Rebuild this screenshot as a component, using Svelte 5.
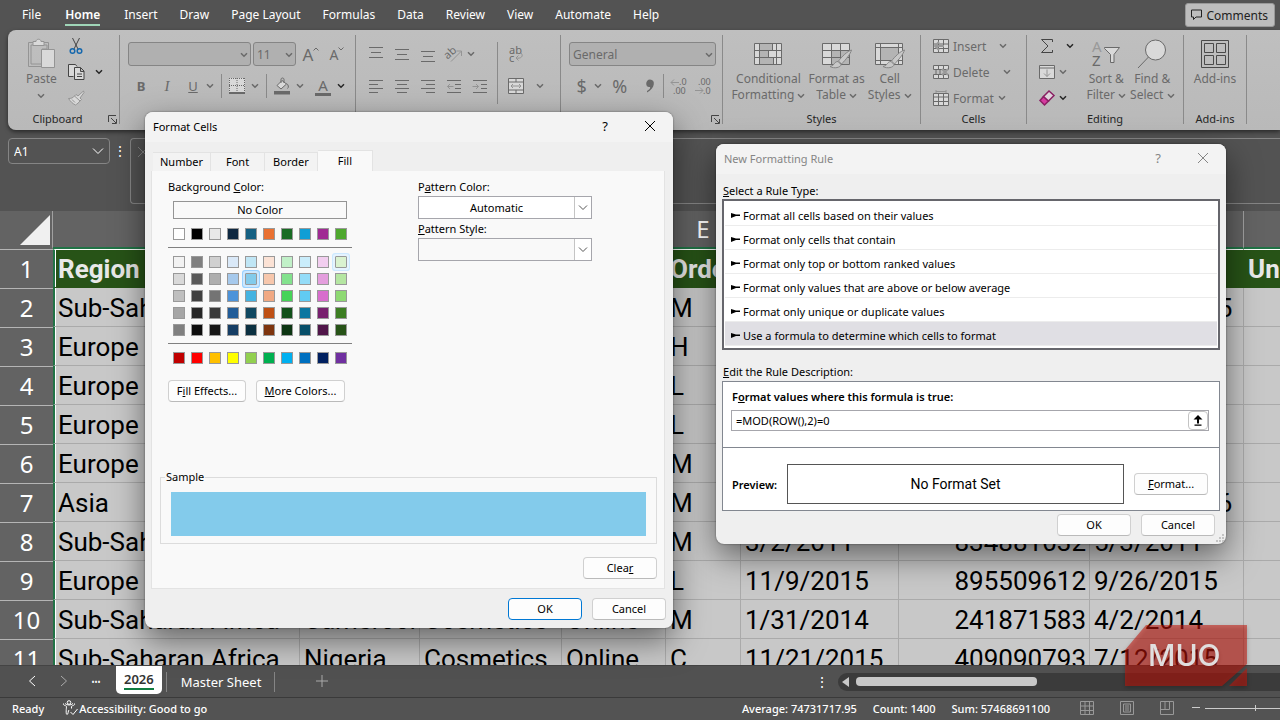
<script lang="ts">
  const menus = ['File', 'Home', 'Insert', 'Draw', 'Page Layout', 'Formulas', 'Data', 'Review', 'View', 'Automate', 'Help'];

  const columns = [
    { letter: 'A', width: 247 },
    { letter: 'B', width: 120 },
    { letter: 'C', width: 142 },
    { letter: 'D', width: 104 },
    { letter: 'E', width: 75 },
    { letter: 'F', width: 158 },
    { letter: 'G', width: 191 },
    { letter: 'H', width: 154 },
    { letter: 'I', width: 150 },
  ];

  const rows = [
    ['Region', 'Country', 'Item Type', 'Channel', 'Order Priority', 'Order Date', 'Order ID', 'Ship Date', 'Units Sold'],
    ['Sub-Saharan Africa', 'Chad', 'Office', 'Online', 'M', '1/27/2015', '292494523', '12/12/2015', ''],
    ['Europe', 'Latvia', 'Beverages', 'Online', 'H', '12/28/2015', '361825549', '1/23/2016', ''],
    ['Europe', 'Latvia', 'Beverages', 'Online', 'L', '1/13/2011', '141515767', '2/1/2011', ''],
    ['Europe', 'Latvia', 'Clothes', 'Online', 'L', '9/11/2012', '500364005', '10/6/2012', ''],
    ['Europe', 'Latvia', 'Clothes', 'Online', 'M', '10/30/2015', '127481591', '1/5/2016', ''],
    ['Asia', 'China', 'Fruits', 'Online', 'M', '9/17/2016', '482292354', '10/22/2016', ''],
    ['Sub-Saharan Africa', 'Ghana', 'Office', 'Online', 'M', '3/2/2011', '834881032', '5/3/2011', ''],
    ['Europe', 'Latvia', 'Clothes', 'Online', 'L', '11/9/2015', '895509612', '9/26/2015', ''],
    ['Sub-Saharan Africa', 'Cameroon', 'Cosmetics', 'Online', 'M', '1/31/2014', '241871583', '4/2/2014', ''],
    ['Sub-Saharan Africa', 'Nigeria', 'Cosmetics', 'Online', 'C', '11/21/2015', '409090793', '7/12/2015', ''],
  ];

  const baseColors = ['#ffffff', '#000000', '#e8e8e8', '#0e2841', '#156082', '#e97132', '#196b24', '#0f9ed5', '#a02b93', '#4ea72e'];

  const shades = [
    ['#f2f2f2', '#808080', '#d0d0d0', '#dae9f8', '#c0e6f5', '#fbe2d5', '#c1f0c8', '#caedfb', '#f2ceef', '#daf2d0'],
    ['#d9d9d9', '#595959', '#aeaeae', '#a6c9ec', '#83cbeb', '#f7c7ac', '#83e28e', '#94dcf8', '#e49edd', '#b5e6a2'],
    ['#bfbfbf', '#404040', '#747474', '#4d93d9', '#44b3e1', '#f1a983', '#47d359', '#61cbf3', '#d86dcd', '#8ed973'],
    ['#a6a6a6', '#262626', '#3a3a3a', '#215c98', '#104861', '#be5014', '#12501a', '#0b76a0', '#78206e', '#3c7d22'],
    ['#808080', '#0d0d0d', '#171717', '#153d64', '#0b3041', '#7e350e', '#0c3512', '#074f69', '#501549', '#275317'],
  ];

  const standardColors = ['#c00000', '#ff0000', '#ffc000', '#ffff00', '#92d050', '#00b050', '#00b0f0', '#0070c0', '#002060', '#7030a0'];

  const ruleTypes = [
    'Format all cells based on their values',
    'Format only cells that contain',
    'Format only top or bottom ranked values',
    'Format only values that are above or below average',
    'Format only unique or duplicate values',
    'Use a formula to determine which cells to format',
  ];

  let fill = $state('#83cbeb');
  let rule = $state(5);
  let formula = $state('=MOD(ROW(),2)=0');
</script>

{#snippet chev(dark = false)}
  <svg class="chev" class:dark width="8" height="6" viewBox="0 0 8 6"><path d="M1 1.2 4 4.2 7 1.2" /></svg>
{/snippet}

{#snippet launcher()}
  <svg class="launcher" width="9" height="9" viewBox="0 0 9 9"><path d="M.5 7V.5H8M3 3l5 5M8.500 4v4.500H4" /></svg>
{/snippet}

{#snippet lines(y: number, widths: number[])}
  <svg width="16" height="18" viewBox="0 0 16 18">
    {#each widths as w, i}
      <path d="M{8 - w / 2} {y + i * 5 - 0.5}h{w}" />
    {/each}
  </svg>
{/snippet}

{#snippet swatches(colors: string[], hot = -1)}
  <div class="swatches">
    {#each colors as color, i}
      <input type="radio" name="fill" value={color} bind:group={fill} aria-label={color} class:hot={i === hot} style="background-color: {color}" />
    {/each}
  </div>
{/snippet}

{#snippet cross()}
  <svg width="12" height="12" viewBox="0 0 12 12"><path d="M1 1l10 10M11 1 1 11" /></svg>
{/snippet}

<div class="app">
  <nav class="menu">
    {#each menus as item}
      <button class:active={item === 'Home'}>{item}</button>
    {/each}
    <button class="comments">
      <svg width="13" height="12" viewBox="0 0 13 12"><path d="M1.500 1h10v7H6L3.500 10.500V8h-2z" /></svg>
      Comments
    </button>
  </nav>

  <div class="ribbon">
    <section class="group clipboard">
      <div class="tools">
        <button class="big">
          <svg width="30" height="32" viewBox="0 0 30 32">
            <path class="lite" d="M2.500 4.500h20v24h-20z" />
            <path class="lite" d="M5 7v19h11V11h5V7z" />
            <path class="lite solid" d="M7 7.500v-4h3c0-3 5-3 5 0h3v4z" />
            <path class="lite solid" d="M15.500 11.500h13v18h-13z" />
          </svg>
          <span>Paste</span>
          {@render chev()}
        </button>
        <div class="stack">
          <button class="line">
            <svg width="16" height="18" viewBox="0 0 16 18"><path class="ink" d="M4.500 1l5.500 11M11.500 1 6 12" /><circle class="blue" cx="4.500" cy="14" r="2.300" /><circle class="blue" cx="11.500" cy="14" r="2.300" /></svg>
          </button>
          <button class="line">
            <svg width="17" height="18" viewBox="0 0 17 18"><path class="ink solid" d="M5.500 13.500h-5V1.500h7l1.500 2" /><path class="ink solid" d="M6.500 4.500h6l3.500 3.500v8.500H6.500zM12.500 4.500v4H16M9 11h5M9 13.500h5" /></svg>
            {@render chev(true)}
          </button>
          <button class="line">
            <svg width="17" height="16" viewBox="0 0 17 16"><path class="lite solid" d="M15.500 1 10 6 8 4.500 6.500 6l5.500 5 1.500-1.500L12 8l4-5.500zM6.500 6C5 8 3 8.500.5 8.500c2 3 4 5 7 6.500 1.500-1 3.500-2.500 4.500-4M4 9.500l3 3" /></svg>
          </button>
        </div>
      </div>
      <h2>Clipboard</h2>
      {@render launcher()}
    </section>

    <section class="group font">
      <div class="bar">
        <label class="pick family"><select aria-label="Font"><option></option></select>{@render chev()}</label>
        <label class="pick size"><select aria-label="Font size"><option>11</option></select>{@render chev()}</label>
        <button class="cell grow">A<svg width="6" height="4" viewBox="0 0 6 4"><path d="M.5 3.500 3 1l2.500 2.500" /></svg></button>
        <button class="cell shrink">A<svg width="6" height="4" viewBox="0 0 6 4"><path d="M.5.5 3 3 5.500.5" /></svg></button>
      </div>
      <div class="bar second">
        <button class="cell"><b>B</b></button>
        <button class="cell serif"><i>I</i></button>
        <button class="cell"><u>U</u></button>
        {@render chev()}
        <span class="rule"></span>
        <button class="cell">
          <svg width="16" height="16" viewBox="0 0 16 16"><path class="solid none" d="M0 0h16v14H0z" /><path class="dots" d="M.5 0v14M8 0v14M15.500 0v14M0 .5h16M0 7.500h16" /><path class="thick" d="M0 15h16" /></svg>
        </button>
        {@render chev()}
        <span class="rule"></span>
        <button class="cell">
          <svg width="16" height="18" viewBox="0 0 16 18"><path class="solid" d="M8 3.500 3 8.500l4 3.500 5.500-5z" /><path d="M7 6V2.500c0-2 3-2 3 0V6M12.500 6.500c2 1 2.500 4 1 5" /><path class="block" d="M0 14h16v3.500H0z" /></svg>
        </button>
        {@render chev()}
        <button class="cell ink-a">A<i></i></button>
        {@render chev(true)}
      </div>
    </section>

    <section class="group align">
      <div class="block-left">
        <div class="bar">
          <button class="cell">{@render lines(3, [14, 10, 14])}</button>
          <button class="cell">{@render lines(5, [14, 10, 14])}</button>
          <button class="cell">{@render lines(7, [14, 10, 14])}</button>
          <button class="cell">
            <svg width="18" height="18" viewBox="0 0 18 18"><text class="tilt" x="0" y="12" transform="rotate(-42 5 10)">ab</text><path class="lite" d="M6 16.500 16 6.500M11.500 6H16.500v5" /></svg>
          </button>
          {@render chev()}
        </div>
        <div class="bar second">
          <button class="cell"><svg width="16" height="18" viewBox="0 0 16 18"><path d="M1 3.500h14M1 7.500h9M1 11.500h14M1 15.500h9" /></svg></button>
          <button class="cell"><svg width="16" height="18" viewBox="0 0 16 18"><path d="M1 3.500h14M3 7.500h10M1 11.500h14M3 15.500h10" /></svg></button>
          <button class="cell"><svg width="16" height="18" viewBox="0 0 16 18"><path d="M1 3.500h14M6 7.500h9M1 11.500h14M6 15.500h9" /></svg></button>
          <button class="cell"><svg width="16" height="18" viewBox="0 0 16 18"><path d="M1 3.500h14M9 7.500h6M9 11.500h6M1 15.500h14" /><path class="lite" d="M1.500 9.500h6M4 7 1.500 9.500 4 12" /></svg></button>
          <button class="cell"><svg width="16" height="18" viewBox="0 0 16 18"><path d="M1 3.500h14M9 7.500h6M9 11.500h6M1 15.500h14" /><path class="lite" d="M.5 9.500h6M4 7l2.500 2.500L4 12" /></svg></button>
        </div>
      </div>
      <span class="rule tall"></span>
      <div class="block-right">
        <button class="wrap-text">
          <svg width="18" height="20" viewBox="0 0 18 20"><text x="1" y="10">ab</text><text x="1" y="18">c</text><path class="lite" d="M13 9c3 3 0 6-5 5M10.500 11.500 8 14l2.500 2.500" /></svg>
        </button>
        <button class="merge">
          <svg width="16" height="16" viewBox="0 0 16 16"><path class="solid" d="M.5.5h15v15H.5zM.5 4h15M.5 12h15M8 .5V4M8 12v3.500" /><path class="lite" d="M3 8h10M5 6 3 8l2 2M11 6l2 2-2 2" /></svg>
          {@render chev()}
        </button>
      </div>
    </section>

    <section class="group number">
      <label class="pick"><select aria-label="Number format"><option>General</option></select>{@render chev()}</label>
      <div class="bar second">
        <button class="cell glyph">$</button>
        {@render chev()}
        <button class="cell glyph wide">%</button>
        <button class="cell"><svg width="10" height="14" viewBox="0 0 10 14"><path class="block" d="M5 .5c6 0 5 9-3 13V12c3-2 3.500-3 3-4C0 9 0 .5 5 .5z" /></svg></button>
        <span class="rule"></span>
        <button class="cell dec"><svg width="17" height="18" viewBox="0 0 17 18"><path class="lite" d="M1 5.500h8M4 2.500l-3 3 3 3" /><text x="9" y="8">.0</text><text x="3" y="17">.00</text></svg></button>
        <button class="cell dec"><svg width="17" height="18" viewBox="0 0 17 18"><text x="3" y="8">.00</text><path class="lite" d="M0 13.500h8M5 10.500l3 3-3 3" /><text x="8" y="17">.0</text></svg></button>
      </div>
      {@render launcher()}
    </section>

    <section class="group styles">
      <div class="tools">
        <button class="big">
          <svg width="28" height="24" viewBox="0 0 28 24"><path class="solid" d="M.5 1.500h27v21H.5z" /><path class="gray" d="M6 2h12v6H6zM6 9h8v6H6zM6 16h14v6H6z" /><path d="M.5 8.500h27M.5 15.500h27M5.500 1.500v21M18.500 1.500v7M14.500 8.500v7M19.500 15.500v7M22.500 1.500v21" /></svg>
          <span>Conditional<br />Formatting {@render chev()}</span>
        </button>
        <button class="big">
          <svg width="30" height="28" viewBox="0 0 30 28"><path class="solid" d="M.5 3.500h27v21H.5z" /><path class="gray" d="M10 11h17v13H10z" /><path d="M.5 10.500h27M.5 17.500h27M9.500 3.500v21M18.500 3.500v21" /><path class="brush" d="M29.500 10c-4 1-10 7-13 11l3 3c4-4 9-10 10-14zM16 21.500c-4 0-3 4-8 5 4 2.500 11 1 11-2z" /></svg>
          <span>Format as<br />Table {@render chev()}</span>
        </button>
        <button class="big">
          <svg width="30" height="28" viewBox="0 0 30 28"><path class="solid" d="M.5 3.500h27v21H.5z" /><path class="gray" d="M6 8h17v12H6z" /><path d="M.5 7.500h27M.5 20.500h27M5.500 3.500v21M23.500 3.500v21" /><path class="brush" d="M29.500 10c-4 1-10 7-13 11l3 3c4-4 9-10 10-14zM16 21.500c-4 0-3 4-8 5 4 2.500 11 1 11-2z" /></svg>
          <span>Cell<br />Styles {@render chev()}</span>
        </button>
      </div>
      <h2>Styles</h2>
    </section>

    <section class="group cells">
      <div class="stack">
        <button class="line">
          <svg width="16" height="14" viewBox="0 0 16 14"><path class="solid" d="M.5.5h15v13H.5zM.5 5h15M.5 9.500h15M5.500.5v13M10.500.5v13" /><path class="arrow" d="M11 7H2M6 3 2 7l4 4" /></svg>
          <span class="wide">Insert</span>{@render chev()}
        </button>
        <button class="line">
          <svg width="16" height="14" viewBox="0 0 16 14"><path class="solid" d="M.5.5h15v4H.5zM.5 9.500h15v4H.5zM5.500.5v4M10.500.5v4M5.500 9.500v4M10.500 9.500v4M3 4.500v5M7 4.500v5" /><path class="arrow" d="M9 4l6 6M15 4l-6 6" /></svg>
          <span class="wide">Delete</span>{@render chev()}
        </button>
        <button class="line">
          <svg width="16" height="16" viewBox="0 0 16 16"><path class="solid" d="M.5 3.500h15v12H.5zM.5 7h15M.5 11.500h15M5.500 3.500v12M10.500 3.500v12" /><path class="lite" d="M3 1.500h10M3 0v3M13 0v3" /></svg>
          <span>Format</span>{@render chev()}
        </button>
      </div>
      <h2>Cells</h2>
    </section>

    <section class="group editing">
      <div class="tools">
        <div class="stack">
          <button class="line first">
            <svg width="16" height="16" viewBox="0 0 16 16"><path class="ink" d="M13.500 4V1.500h-11L9 8l-6.500 6.500h11V12" /></svg>{@render chev(true)}
          </button>
          <button class="line">
            <svg width="16" height="14" viewBox="0 0 16 14"><path class="solid" d="M.5.5h15v13H.5zM.5 3h15" /><path class="lite" d="M8 4.500v7M5 8.500l3 3 3-3" /></svg>{@render chev()}
          </button>
          <button class="line">
            <svg width="16" height="16" viewBox="0 0 16 16"><path class="pink" d="M4.500 6.500 1 10.500l4.500 4.500 4-4z" /><path class="pink hollow" d="M4.500 6.500 10 1l5 4.500L9.500 11z" /></svg>{@render chev(true)}
          </button>
        </div>
        <button class="big">
          <svg width="28" height="28" viewBox="0 0 28 28"><text class="az faint" x="0" y="12">A</text><text class="az" x="0" y="26">Z</text><path class="solid" d="M12.500 7.500h15l-5.500 7v8h-3.500v-8l-6-6z" /></svg>
          <span>Sort &amp;<br />Filter {@render chev()}</span>
        </button>
        <button class="big">
          <svg width="30" height="30" viewBox="0 0 30 30"><circle class="solid" cx="18.500" cy="11" r="10" /><path d="M11.500 18 1 29" /></svg>
          <span>Find &amp;<br />Select {@render chev()}</span>
        </button>
      </div>
      <h2>Editing</h2>
    </section>

    <section class="group addins">
      <button class="big">
        <svg class="boxes" width="28" height="28" viewBox="0 0 28 28"><path d="M.5.5h27v27H.5zM3.500 3.500h9v9h-9zM15.500 3.500h9v9h-9zM3.500 15.500h9v9h-9zM15.500 15.500h9v9h-9z" /></svg>
        <span>Add-ins</span>
      </button>
      <h2>Add-ins</h2>
    </section>
  </div>

  <div class="formula-row">
    <label class="name-box">
      <input aria-label="Name box" value="A1" />
      <svg width="12" height="8" viewBox="0 0 12 8"><path d="M1 1.500l5 5 5-5" /></svg>
    </label>
    <span class="kebab">⋮</span>
    <div class="formula-box">{@render cross()}</div>
  </div>

  <main class="sheet">
    <table>
      <colgroup>
        <col style="width: 53px" />
        {#each columns as col}<col style="width: {col.width}px" />{/each}
      </colgroup>
      <thead>
        <tr>
          <th><svg width="30" height="30" viewBox="0 0 30 30"><path d="M30 0v30H0z" /></svg></th>
          {#each columns as col}<th scope="col">{col.letter}</th>{/each}
        </tr>
      </thead>
      <tbody>
        {#each rows as row, r}
          <tr class:titles={r === 0}>
            <th scope="row">{r + 1}</th>
            {#each row as value, c}<td class:num={c === 6 && r > 0}>{value}</td>{/each}
          </tr>
        {/each}
      </tbody>
    </table>
  </main>

  <div class="tabs">
    <button class="nav"><svg width="8" height="12" viewBox="0 0 8 12"><path d="M7 1 1.500 6 7 11" /></svg></button>
    <button class="nav"><svg class="dim" width="8" height="12" viewBox="0 0 8 12"><path d="M1 1l5.500 5L1 11" /></svg></button>
    <button class="nav dots">•••</button>
    <button class="tab current"><span>2026</span></button>
    <button class="tab">Master Sheet</button>
    <button class="plus"><svg width="12" height="12" viewBox="0 0 12 12"><path d="M6 0v12M0 6h12" /></svg></button>
    <span class="kebab">⋮</span>
    <div class="scroll">
      <svg width="7" height="10" viewBox="0 0 7 10"><path d="M7 0v10L0 5z" /></svg>
      <div class="thumb"></div>
    </div>
  </div>

  <footer class="status">
    <span>Ready</span>
    <span class="access">
      <svg width="17" height="16" viewBox="0 0 17 16"><circle cx="7" cy="2.500" r="1.800" /><path d="M1.500 3.500c-1 2 3 2 3 3s-1 8 .5 8 1-4 2-4.500M12.500 3.500c1 2-3 2-3 3v2M8.500 12l2.500 2.500L15.500 9M3 3.500c2 2 6 2 8 0" /></svg>
      Accessibility: Good to go
    </span>
    <span class="stats">
      <span>Average: 74731717.95</span>
      <span>Count: 1400</span>
      <span>Sum: 57468691100</span>
    </span>
    <span class="views">
      <svg width="14" height="14" viewBox="0 0 14 14"><path d="M.5.5h13v13H.5zM.5 5h13M.5 9.500h13M5 .5v13M9.500.5v13" /></svg>
      <svg width="14" height="14" viewBox="0 0 14 14"><path d="M.5.5h13v13H.5zM3.500 3h7v8h-7zM5 5h4M5 7h4M5 9h4" /></svg>
      <svg width="14" height="14" viewBox="0 0 14 14"><path d="M.5.5h13v13H.5zM5 .5v8M9.500.5v8M.5 8.500h9" /></svg>
    </span>
    <span class="zoom">
      <svg width="88" height="8" viewBox="0 0 88 8"><path d="M0 3.500h8M13 4.500h75M63.500 1v6" /></svg>
    </span>
  </footer>

  <div class="dialog rule-dialog" role="dialog" aria-labelledby="rule-title">
    <header>
      <h1 id="rule-title">New Formatting Rule</h1>
      <button class="sys">?</button>
      <button class="sys">{@render cross()}</button>
    </header>
    <div class="rule-body">
      <p class="caption"><u>S</u>elect a Rule Type:</p>
      <ul>
        {#each ruleTypes as type, i}
          <li>
            <button class:selected={rule === i} onclick={() => (rule = i)}>
              <svg width="9" height="5" viewBox="0 0 9 5"><path d="M0 0l5 1.500h4v1.500H5L0 5z" /></svg>
              {type}
            </button>
          </li>
        {/each}
      </ul>
      <p class="caption"><u>E</u>dit the Rule Description:</p>
      <div class="description">
        <label for="formula">F<u>o</u>rmat values where this formula is true:</label>
        <div class="formula-input">
          <input id="formula" bind:value={formula} />
          <button aria-label="Collapse dialog">
            <svg width="10" height="11" viewBox="0 0 10 11"><path d="M5 0 9.500 4.500H6V8.500H4V4.500H.5zM1.500 9.500h7v1.200h-7z" /></svg>
          </button>
        </div>
        <div class="preview">
          <b>Preview:</b>
          <output>No Format Set</output>
          <button class="push"><u>F</u>ormat...</button>
        </div>
      </div>
      <div class="actions">
        <button class="push">OK</button>
        <button class="push">Cancel</button>
      </div>
    </div>
    <svg class="grip" width="9" height="9" viewBox="0 0 9 9"><path d="M6 0h2v2H6zM3 3h2v2H3zM6 3h2v2H6zM0 6h2v2H0zM3 6h2v2H3zM6 6h2v2H6z" /></svg>
  </div>

  <div class="dialog cells-dialog" role="dialog" aria-labelledby="cells-title">
    <header>
      <h1 id="cells-title">Format Cells</h1>
      <button class="sys">?</button>
      <button class="sys">{@render cross()}</button>
    </header>
    <div class="tablist" role="tablist">
      <button role="tab" aria-selected="false">Number</button>
      <button role="tab" aria-selected="false">Font</button>
      <button role="tab" aria-selected="false">Border</button>
      <button role="tab" aria-selected="true">Fill</button>
    </div>
    <div class="panel">
      <div class="panes">
        <div class="background">
          <p class="caption">Background <u>C</u>olor:</p>
          <button class="no-color">No Color</button>
          <div class="palette">{@render swatches(baseColors)}</div>
          <div class="palette shades">
            {#each shades as shade, i}{@render swatches(shade, i === 0 ? 9 : -1)}{/each}
          </div>
          <div class="palette">{@render swatches(standardColors)}</div>
          <div class="pair">
            <button class="push">F<u>i</u>ll Effects...</button>
            <button class="push more"><u>M</u>ore Colors...</button>
          </div>
        </div>
        <div class="pattern">
          <label for="pattern-color">P<u>a</u>ttern Color:</label>
          <div class="combo white">
            <select id="pattern-color"><option>Automatic</option></select>
            <span><svg width="10" height="6" viewBox="0 0 10 6"><path d="M1 .5l4 4 4-4" /></svg></span>
          </div>
          <label for="pattern-style"><u>P</u>attern Style:</label>
          <div class="combo">
            <select id="pattern-style"><option></option></select>
            <span><svg width="10" height="6" viewBox="0 0 10 6"><path d="M1 .5l4 4 4-4" /></svg></span>
          </div>
        </div>
      </div>
      <fieldset>
        <legend>Sample</legend>
        <div class="sample" style="background-color: {fill}"></div>
      </fieldset>
      <button class="push clear">Clea<u>r</u></button>
    </div>
    <div class="actions">
      <button class="push default">OK</button>
      <button class="push">Cancel</button>
    </div>
  </div>

  <div class="logo">
    <svg width="124" height="64" viewBox="0 0 124 64">
      <path d="M22 1h101v39L98 62H1V26zM123 44v18h-18z" />
      <text x="24" y="42">MUO</text>
    </svg>
  </div>
</div>

<style>
  :global(body) {
    margin: 0;
  }

  .app {
    position: relative;
    display: flex;
    flex-direction: column;
    height: 100vh;
    overflow: hidden;
    background: #535353;
    color: #fff;
    font-family: 'Noto Sans', 'Open Sans', sans-serif;
    font-size: 12px;
  }

  button,
  input,
  select {
    margin: 0;
    padding: 0;
    border: 0;
    background: none;
    color: inherit;
    font: inherit;
  }

  h1,
  h2,
  p,
  ul {
    margin: 0;
    padding: 0;
    font-weight: 400;
    list-style: none;
  }

  svg {
    flex: none;
    overflow: visible;
    fill: none;
    stroke: currentColor;
  }

  /* menu */
  .menu {
    display: flex;
    flex: none;
    align-items: center;
    gap: 22px;
    height: 30px;
    padding: 0 5px 0 22px;
  }

  .menu button {
    height: 22px;
    border-bottom: 2px solid transparent;
    white-space: nowrap;
  }

  .menu .active {
    margin: 0 2px;
    border-color: #9fd5b7;
    font-weight: 600;
  }

  .menu .comments {
    display: flex;
    align-items: center;
    gap: 3px;
    height: 24px;
    margin-left: auto;
    padding: 0 6px 0 4px;
    border: 1px solid #999;
    border-radius: 3px;
    background: #bdbdbd;
    color: #222;
  }

  /* ribbon */
  .ribbon {
    display: flex;
    flex: none;
    height: 100px;
    margin-left: 8px;
    border-radius: 8px 0 0 8px;
    background: linear-gradient(#bfbfbf, #b9b9b9);
    box-shadow: 0 2px 4px rgba(0, 0, 0, 0.5);
    color: #6a6a6a;
  }

  .group {
    position: relative;
    display: flex;
    flex: none;
    flex-direction: column;
    box-sizing: border-box;
    padding: 3px 1px 6px 0;
  }

  .group::after {
    position: absolute;
    inset: 5px 0 6px auto;
    width: 1px;
    background: #8a8a8a;
    content: '';
  }

  .group h2 {
    margin-top: auto;
    color: #262626;
    font-size: 11px;
    line-height: 10px;
    text-align: center;
  }

  .clipboard {
    width: 112px;
  }
  .clipboard h2 {
    padding-right: 12px;
  }
  .font {
    width: 236px;
    padding: 12px 0 0 8px;
  }
  .group.align {
    flex-direction: row;
    width: 205px;
    padding: 12px 0 0 7px;
  }
  .number {
    width: 162px;
    padding: 12px 7px 0 8px;
  }
  .styles {
    width: 198px;
  }
  .cells {
    width: 106px;
    padding-left: 12px;
  }
  .cells h2 {
    padding-right: 12px;
  }
  .editing {
    width: 157px;
  }
  .addins {
    width: 63px;
    align-items: center;
  }

  .launcher {
    position: absolute;
    right: 3px;
    bottom: 6px;
    color: #444;
  }

  .chev {
    stroke: #6a6a6a;
    stroke-width: 1.5;
  }
  .chev.dark {
    stroke: #262626;
  }

  .lite {
    fill: none;
    stroke: #949494;
  }
  .solid,
  .lite.solid {
    fill: #d9d9d9;
  }
  .none {
    stroke: none;
  }
  .ink {
    stroke: #444;
  }
  .gray {
    fill: #b4b4b4;
    stroke: none;
  }
  .blue {
    stroke: #1668ad;
    stroke-width: 1.5;
  }
  .block {
    fill: #6a6a6a;
    stroke: none;
  }
  .thick {
    stroke-width: 2;
  }
  .dots {
    stroke-dasharray: 1 1;
  }
  .arrow {
    stroke: #999;
    stroke-width: 2;
  }
  .brush {
    fill: #c8c8c8;
    stroke: #858585;
  }
  .pink {
    fill: #d63ba0;
    stroke: #8a1f63;
    stroke-width: 1.5;
  }
  .pink.hollow {
    fill: #e0d4dc;
  }

  .ribbon text {
    fill: #6a6a6a;
    stroke: none;
    font-size: 11px;
  }
  .ribbon .az {
    font-size: 15px;
  }
  .ribbon .faint {
    fill: #999;
  }
  .ribbon .dec text {
    font-size: 9px;
  }

  .tools {
    display: flex;
    justify-content: center;
    gap: 3px;
  }

  .big {
    display: flex;
    flex-direction: column;
    align-items: center;
    padding-top: 4px;
    line-height: 16px;
  }

  .big > svg:first-child {
    height: 34px;
  }

  .big span {
    white-space: nowrap;
  }

  .clipboard .tools {
    justify-content: flex-start;
    gap: 11px;
    padding-left: 18px;
  }

  .clipboard .big > .chev {
    margin-top: 6px;
  }

  .stack {
    display: flex;
    flex-direction: column;
  }

  .line {
    display: flex;
    align-items: center;
    gap: 10px;
    height: 26px;
  }
  .cells .line {
    gap: 4px;
  }
  .cells .wide {
    margin-right: 9px;
  }

  .editing .line {
    gap: 4px;
  }
  .editing .first {
    gap: 11px;
  }
  .editing .tools {
    gap: 12px;
    padding-left: 4px;
  }
  .editing .big + .big {
    margin-left: -8px;
  }
  .boxes {
    color: #4a4a4a;
  }

  .bar {
    display: flex;
    align-items: center;
    height: 24px;
  }
  .second {
    margin-top: 8px;
  }

  .cell {
    display: flex;
    align-items: center;
    justify-content: center;
    width: 26px;
    height: 24px;
    font-size: 13px;
  }
  .cell.serif {
    font-family: 'Liberation Serif', serif;
    font-size: 15px;
  }
  .cell.glyph {
    font-size: 18px;
  }
  .cell.wide {
    width: 36px;
  }
  .grow {
    margin-left: 2px;
    font-size: 17px;
  }
  .shrink {
    font-size: 14px;
  }
  .grow svg,
  .shrink svg {
    align-self: flex-start;
    margin-top: 5px;
  }
  .ink-a {
    flex-direction: column;
    font-size: 15px;
    line-height: 16px;
  }
  .ink-a i {
    width: 16px;
    height: 3px;
    background: #6a6a6a;
  }

  .rule {
    width: 1px;
    height: 24px;
    margin: 0 7px;
    background: #8a8a8a;
  }
  .rule.tall {
    height: 62px;
    margin: 0 10px 0 4px;
  }
  .font .second .cell:nth-child(n + 6) {
    width: 28px;
  }
  .font .second .ink-a {
    margin-left: 5px;
  }
  .font .second .rule {
    margin: 0 1px 0 7px;
  }
  .number .rule {
    margin: 0 2px 0 0;
  }

  .block-right {
    display: flex;
    flex-direction: column;
    gap: 8px;
  }
  .wrap-text,
  .merge {
    display: flex;
    align-items: center;
    gap: 12px;
    height: 24px;
  }

  .pick {
    position: relative;
    display: flex;
    box-sizing: border-box;
    height: 24px;
    border: 1px solid #858585;
    border-radius: 3px;
    background: #b0b0b0;
  }
  .pick select {
    width: 100%;
    padding-left: 3px;
    appearance: none;
  }
  .pick .chev {
    position: absolute;
    top: 9px;
    right: 2px;
  }
  .family {
    width: 123px;
    margin-right: 2px;
  }
  .size {
    width: 43px;
  }

  /* formula bar */
  .formula-row {
    display: flex;
    flex: none;
    align-items: flex-start;
    height: 66px;
    margin: 8px 0 7px 8px;
  }

  .name-box {
    display: flex;
    align-items: center;
    box-sizing: border-box;
    width: 102px;
    height: 26px;
    padding: 0 5px;
    border: 1px solid #858585;
    border-radius: 4px;
  }
  .name-box input {
    flex: 1;
    min-width: 0;
  }

  .kebab {
    width: 20px;
    line-height: 26px;
    font-size: 14px;
    text-align: center;
  }

  .formula-box {
    flex: 1;
    align-self: stretch;
    padding: 6px;
    border: 1px solid #858585;
    border-right: 0;
    border-radius: 4px 0 0 4px;
    box-sizing: border-box;
    color: #858585;
  }

  /* sheet */
  .sheet {
    flex: 1;
    min-height: 0;
    overflow: hidden;
    background: #c8c8c8;
    color: #000;
    font-family: Roboto, sans-serif;
    font-size: 26px;
  }

  table {
    width: 1394px;
    table-layout: fixed;
    border-spacing: 0;
  }

  th,
  td {
    box-sizing: border-box;
    padding: 1px 3px 0 4px;
    overflow: hidden;
    line-height: 32px;
    text-align: left;
    white-space: nowrap;
  }

  th {
    padding: 0;
    background: #636363;
    color: #fff;
    font-family: 'Noto Sans', sans-serif;
    font-size: 24px;
    font-weight: 400;
    text-align: center;
  }

  thead th {
    height: 38px;
    border-right: 1px solid #a0a0a0;
    border-bottom: 2px solid #217346;
  }
  thead th:first-child {
    border-bottom-color: #636363;
    vertical-align: bottom;
  }
  thead svg {
    display: block;
    margin: 0 2px 2px auto;
    fill: #f0f0f0;
    stroke: none;
  }

  tbody th {
    height: 39px;
    border-top: 1px solid #b5b5b5;
  }

  td {
    height: 39px;
    border-right: 1px solid #aaa;
    border-bottom: 1px solid #aaa;
  }
  td:nth-child(2) {
    border-left: 2px solid #217346;
    box-shadow: inset 1px 0 #fff;
    padding-left: 3px;
  }
  .num {
    text-align: right;
  }
  .titles td {
    padding-top: 0;
    border-top: 1px solid #fff;
    border-right-color: #275317;
    border-bottom-color: #275317;
    background: #275317;
    color: #e8e8e8;
    font-weight: 700;
  }

  /* sheet tabs */
  .tabs {
    display: flex;
    flex: none;
    align-items: center;
    box-sizing: border-box;
    height: 33px;
    padding-left: 16px;
    border-top: 1px solid #444;
    border-bottom: 1px solid #3a3a3a;
    background: #515151;
    font-size: 13px;
  }

  .nav {
    width: 32px;
    height: 24px;
  }
  .nav.dots {
    font-size: 8px;
  }
  .dim {
    color: #aaa;
  }

  .tab {
    height: 20px;
    margin-left: 4px;
    padding: 0 13px 0 14px;
    border-right: 1px solid #858585;
    border-left: 1px solid #858585;
    line-height: 18px;
  }
  .tab.current {
    display: flex;
    align-self: flex-start;
    align-items: center;
    height: 28px;
    margin-left: 4px;
    padding: 0 8px;
    border: 0;
    border-radius: 0 0 5px 5px;
    background: #fff;
    color: #333;
    font-weight: 600;
  }
  .current span {
    border-bottom: 2px solid #107c41;
  }

  .tabs .plus {
    margin-left: 41px;
    color: #aaa;
  }
  .tabs .kebab {
    margin-left: auto;
  }

  .scroll {
    display: flex;
    align-items: center;
    gap: 7px;
    box-sizing: border-box;
    width: 442px;
    height: 18px;
    margin-left: 6px;
    padding-left: 4px;
    border-radius: 9px 0 0 9px;
    background: #3b3b3b;
  }
  .scroll svg {
    fill: #c8c8c8;
    stroke: none;
  }
  .thumb {
    width: 181px;
    height: 9px;
    border-radius: 4px;
    background: #c8c8c8;
  }

  /* status bar */
  .status {
    display: flex;
    flex: none;
    align-items: center;
    gap: 18px;
    box-sizing: border-box;
    height: 22px;
    padding: 0 0 2px 12px;
    font-size: 11px;
    font-weight: 500;
    white-space: nowrap;
  }
  .access {
    display: flex;
    align-items: center;
  }
  .stats {
    display: flex;
    gap: 16px;
    margin-left: auto;
  }
  .views {
    display: flex;
    gap: 26px;
    margin-left: 12px;
    color: #999;
  }
  .zoom {
    display: flex;
    color: #ccc;
  }

  /* dialogs */
  .dialog {
    position: absolute;
    display: flex;
    flex-direction: column;
    box-sizing: border-box;
    border-radius: 8px;
    background: #efefef;
    color: #000;
    font-size: 11px;
    box-shadow: 0 0 2px rgba(0, 0, 0, 0.5), 0 12px 32px rgba(0, 0, 0, 0.5);
  }

  .dialog header {
    display: flex;
    flex: none;
    align-items: center;
    box-sizing: border-box;
    height: 30px;
    padding: 0 8px 2px;
    border-radius: 8px 8px 0 0;
    background: #f3f3f3;
  }
  .dialog h1 {
    flex: 1;
    font-size: 11px;
  }
  .sys {
    display: flex;
    align-items: center;
    justify-content: center;
    width: 30px;
    margin-left: 15px;
    font-size: 13px;
  }

  .caption,
  .pattern label {
    line-height: 16px;
  }

  .push {
    box-sizing: border-box;
    min-width: 74px;
    height: 22px;
    padding-bottom: 2px;
    border: 1px solid #d0d0d0;
    border-bottom-color: #bababa;
    border-radius: 4px;
    background: #fdfdfd;
    text-align: center;
  }
  .push.default {
    border-color: #0078d4;
  }

  .actions {
    display: flex;
    justify-content: flex-end;
    gap: 10px;
  }

  .cells-dialog {
    top: 112px;
    left: 145px;
    width: 528px;
    padding-bottom: 8px;
  }
  .cells-dialog .actions {
    padding: 9px 7px 0 0;
  }

  .tablist {
    display: flex;
    align-items: flex-end;
    height: 21px;
    margin-top: 8px;
    padding-left: 8px;
  }
  .tablist button {
    box-sizing: border-box;
    height: 19px;
    padding: 0 7px 2px;
    border: 1px solid #e3e3e3;
    border-width: 1px 1px 0 0;
    background: #f3f3f3;
    white-space: nowrap;
  }
  .tablist button:nth-child(2) {
    padding: 0 15px 2px;
  }
  .tablist button:nth-child(3) {
    padding: 0 8px 2px;
  }
  .tablist [aria-selected='true'] {
    height: 21px;
    padding: 0 20px 2px;
    background: #f9f9f9;
  }

  .panel {
    display: flex;
    flex-direction: column;
    margin: 0 8px 0 6px;
    padding: 8px 7px 9px 8px;
    border: 1px solid #e3e3e3;
    border-top: 0;
    background: #f9f9f9;
  }
  .panes {
    display: flex;
    gap: 66px;
    padding-left: 8px;
  }
  .background {
    width: 184px;
  }

  .no-color {
    display: block;
    box-sizing: border-box;
    width: 174px;
    height: 18px;
    margin: 6px 5px 9px;
    border: 1px solid #949494;
    line-height: 16px;
  }

  .palette {
    display: flex;
    flex-direction: column;
    gap: 5px;
    padding-left: 5px;
  }
  .shades {
    margin: 7px 0 8px;
    padding: 8px 0 7px 5px;
    border-top: 1px solid #808080;
    border-bottom: 1px solid #808080;
  }
  .swatches {
    display: flex;
    gap: 6px;
  }
  .swatches input {
    width: 12px;
    height: 12px;
    border: 1px solid #999;
    box-sizing: border-box;
    appearance: none;
  }
  .swatches input:checked {
    border-radius: 1px;
    box-shadow: 0 0 0 2px #cce8ff, 0 0 0 3px #99d1ff;
  }
  .swatches .hot {
    border-radius: 1px;
    box-shadow: 0 0 0 2px #e5f3ff, 0 0 0 3px #cce8ff;
  }

  .pair {
    display: flex;
    gap: 10px;
    margin: 16px 0 0;
  }
  .pair .push {
    flex: none;
    width: 78px;
    white-space: nowrap;
  }
  .pair .more {
    width: 89px;
  }

  .pattern {
    display: flex;
    flex-direction: column;
  }
  .combo {
    position: relative;
    display: flex;
    box-sizing: border-box;
    width: 174px;
    height: 23px;
    margin: 1px 0 2px;
    border: 1px solid #a6a6ac;
  }
  .combo.white {
    background: #fff;
  }
  .combo select {
    flex: 1;
    padding-right: 17px;
    appearance: none;
    text-align: center;
    text-align-last: center;
  }
  .combo span {
    position: absolute;
    inset: 0 0 0 auto;
    display: grid;
    place-items: center;
    width: 16px;
    border-left: 1px solid #c4c4c4;
    background: #fff;
    color: #555;
    pointer-events: none;
  }

  fieldset {
    margin: 68px 0 0;
    padding: 8px 10px 7px;
    border: 1px solid #dcdcdc;
  }
  legend {
    margin-left: -6px;
    padding: 0 1px;
    line-height: 14px;
  }
  .sample {
    height: 44px;
  }
  .clear {
    align-self: flex-end;
    margin-top: 13px;
  }

  .rule-dialog {
    top: 144px;
    left: 716px;
    width: 510px;
    padding-bottom: 8px;
  }
  .rule-dialog header {
    color: #858585;
  }
  .rule-body {
    padding: 9px 6px 0;
  }
  .rule-body .caption {
    padding-left: 1px;
  }

  .rule-body ul {
    box-sizing: border-box;
    margin: 0 0 14px;
    padding: 1px 1px 2px;
    border: 2px solid #66666c;
    background: #fff;
  }
  .rule-body li button {
    display: flex;
    align-items: center;
    gap: 3px;
    box-sizing: border-box;
    width: 100%;
    height: 24px;
    padding: 3px 6px 0;
    border-bottom: 1px solid #ececec;
  }
  .rule-body li svg,
  .formula-input svg {
    fill: #000;
    stroke: none;
  }
  .rule-body li .selected {
    background: #e0dfe4;
  }

  .description {
    margin-top: 1px;
    border: 1px solid #828790;
    background: #fff;
  }
  .description label,
  .description b {
    font-weight: 600;
  }
  .description label {
    display: block;
    padding: 7px 9px 5px;
    line-height: 16px;
  }
  .formula-input {
    display: flex;
    box-sizing: border-box;
    height: 21px;
    margin: 0 10px 16px 8px;
    border: 1px solid #a6a6ac;
  }
  .formula-input input {
    flex: 1;
    min-width: 0;
    padding-left: 4px;
  }
  .formula-input button {
    display: grid;
    place-items: center;
    width: 20px;
    border: 1px solid #c4c4c4;
    border-radius: 4px;
  }

  .preview {
    display: flex;
    align-items: center;
    gap: 10px;
    padding: 16px 11px 6px 9px;
    border-top: 1px solid #828790;
  }
  .preview output {
    display: grid;
    flex: 1;
    place-items: center;
    height: 38px;
    border: 1px solid #555;
    font-family: Roboto, sans-serif;
    font-size: 14px;
  }

  .rule-dialog .actions {
    padding: 3px 5px 0 0;
  }

  .grip {
    position: absolute;
    right: 1px;
    bottom: 1px;
    fill: #c4c4c4;
    stroke: none;
  }

  /* watermark */
  .logo {
    position: absolute;
    right: 32px;
    bottom: 32px;
  }
  .logo svg {
    display: block;
    filter: drop-shadow(0 2px 2px rgba(0, 0, 0, 0.4));
  }
  .logo path {
    fill: rgba(195, 20, 10, 0.55);
    stroke: none;
  }
  .logo text {
    fill: #e0dede;
    stroke: none;
    font-family: Inter, sans-serif;
    font-size: 30px;
    font-weight: 500;
  }
</style>
